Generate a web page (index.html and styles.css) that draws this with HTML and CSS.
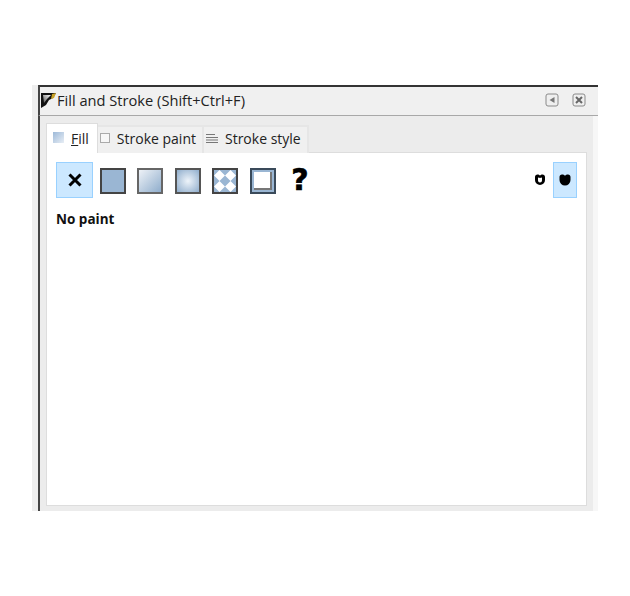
FILE: index.html
```html
<!DOCTYPE html>
<html lang="en">
<head>
    <meta charset="UTF-8">
    <title>Fill and Stroke</title>
    <link rel="stylesheet" href="styles.css">
</head>
<body>
    <div class="window">
        <div class="title-bar">
            <svg class="title-icon" width="17" height="18" viewBox="0 0 17 18">
                <defs>
                    <linearGradient id="brush" x1="1" y1="0" x2="0" y2="1">
                        <stop offset="0" stop-color="#fff"/>
                        <stop offset="1" stop-color="#555"/>
                    </linearGradient>
                </defs>
                <path d="M1 2h15l-3 5-4 2-3 5-5 3z" fill="#111"/>
                <path d="M3 4h8L7 8l-3 4z" fill="url(#brush)"/>
                <path d="M12 3l4-1-2 5-3 1z" fill="#c9a227"/>
            </svg>
            <span class="title-text">Fill and Stroke (Shift+Ctrl+F)</span>
            <div class="title-buttons">
                <svg class="title-button" width="14" height="14" viewBox="0 0 14 14">
                    <rect x="1" y="1" width="12" height="12" rx="2" fill="#efefef" stroke="#8a8a8a"/>
                    <path d="M9.500 4v6L4.500 7z" fill="#777"/>
                </svg>
                <svg class="title-button" width="14" height="14" viewBox="0 0 14 14">
                    <rect x="1" y="1" width="12" height="12" rx="2" fill="#efefef" stroke="#8a8a8a"/>
                    <path d="M4 4l6 6M10 4l-6 6" stroke="#666" stroke-width="2"/>
                </svg>
            </div>
        </div>
        <div class="panel">
            <div class="tabs">
                <div class="tab active">
                    <span class="swatch-fill"></span>
                    <span><u>F</u>ill</span>
                </div>
                <div class="tab">
                    <span class="swatch-none"></span>
                    <span>Stroke paint</span>
                </div>
                <div class="tab">
                    <svg width="12" height="10" viewBox="0 0 12 10">
                        <path d="M0 1.500h9M0 4.500h12M0 7h12M0 9.500h12" stroke="#777" stroke-width="1"/>
                    </svg>
                    <span>Stroke style</span>
                </div>
            </div>
            <div class="tab-content">
                <div class="paint-row">
                    <div class="paint-button selected">
                        <svg width="14" height="14" viewBox="0 0 14 14">
                            <path d="M1.500 1.500l11 11M12.500 1.500l-11 11" stroke="#000" stroke-width="3"/>
                        </svg>
                    </div>
                    <div class="paint-button"><span class="paint flat"></span></div>
                    <div class="paint-button"><span class="paint linear"></span></div>
                    <div class="paint-button"><span class="paint radial"></span></div>
                    <div class="paint-button">
                        <svg class="paint pattern" width="26" height="26" viewBox="0 0 22 22">
                            <path d="M5.500 0l5.500 5.500-5.500 5.500L0 5.500zM16.500 0L22 5.500 16.500 11 11 5.500zM5.500 11l5.500 5.500L5.500 22 0 16.500zM16.500 11l5.500 5.500-5.500 5.500-5.500-5.500z" fill="#fff"/>
                        </svg>
                    </div>
                    <div class="paint-button"><span class="paint swatch"><span class="swatch-inner"></span></span></div>
                    <div class="paint-button unset">?</div>
                    <div class="rule-buttons">
                        <div class="rule-button">
                            <svg width="12" height="12" viewBox="0 0 12 12">
                                <path d="M3.500 .5c1 0 2 .5 2.500 1 .5-.5 1.500-1 2.500-1 1.500 0 2.500 1 2.500 2.500v3a5 5 0 0 1-10 0V3C1 1.500 2 .5 3.500 .5z" fill="#000"/>
                                <path d="M4.500 3.500c.5 0 1 .3 1.500.5.5-.2 1-.5 1.500-.5.3 0 .5.3.5 .5v2.500a2 2 0 0 1-4 0V4c0-.2.2-.5.5-.5z" fill="#fff"/>
                            </svg>
                        </div>
                        <div class="rule-button selected">
                            <svg width="12" height="12" viewBox="0 0 12 12">
                                <path d="M3 .5c1.200 0 2.300.5 3 1.200C6.700 1 7.800.5 9 .5c1.500 0 2.500 1 2.500 2.500v3a5.500 5.500 0 0 1-11 0V3C.5 1.500 1.500.5 3 .5z" fill="#000"/>
                            </svg>
                        </div>
                    </div>
                </div>
                <div class="paint-label">No paint</div>
            </div>
        </div>
    </div>
</body>
</html>
```

FILE: styles.css
```css
* {
    box-sizing: border-box;
}
body {
    margin: 0;
    background-color: #fff;
    font-family: "Open Sans", sans-serif;
    font-size: 14px;
    color: #222;
    overflow: hidden;
}
.window {
    width: 566px;
    height: 426px;
    margin: 85px 0 0 32px;
    padding-left: 6px;
    background: linear-gradient(to right, #eee 6px, #f7f7f7 6px);
    display: flex;
    flex-direction: column;
}
.title-bar {
    height: 31px;
    flex: none;
    display: flex;
    align-items: center;
    padding: 0 12px 3px 0;
    background-color: #f0f0f0;
    border-top: 2px solid #333;
    border-left: 2px solid #444;
    border-bottom: 1px solid #a8a8a8;
}
.title-icon {
    flex: none;
}
.title-text {
    font-size: 14.650px;
    white-space: nowrap;
}
.title-buttons {
    margin-left: auto;
    display: flex;
    gap: 13px;
}
.panel {
    flex: 1;
    display: flex;
    flex-direction: column;
    min-height: 0;
    padding: 6px 11px 5px 6px;
    border-left: 2px solid #444;
    background: linear-gradient(to left, #f7f7f7 5px, #ececec 5px);
}
.tabs {
    height: 30px;
    flex: none;
    display: flex;
    align-items: flex-end;
    position: relative;
    top: 1px;
}
.tab {
    height: 28px;
    display: flex;
    align-items: center;
    gap: 7px;
    padding: 0 6px 4px 2px;
    background-color: #f0f0f0;
    border: 2px solid #e6e6e6;
    border-bottom: none;
    border-left: none;
}
.tab.active {
    height: 30px;
    padding: 0 8px 0 6px;
    gap: 7px;
    background-color: #fff;
    border: 1px solid #ddd;
    border-bottom: none;
}
.swatch-fill {
    width: 11px;
    height: 11px;
    margin-bottom: 3px;
    background: linear-gradient(135deg, #9db9d8, #e8eef5);
}
.swatch-none {
    width: 10px;
    height: 10px;
    background-color: #f7f7f7;
    border: 1px solid #aaa;
}
.tab-content {
    flex: 1;
    min-height: 0;
    background-color: #fff;
    border: 1px solid #ddd;
    padding: 9px;
}
.paint-row {
    display: flex;
    align-items: center;
    height: 36px;
    gap: 1.500px;
}
.paint-button {
    width: 36px;
    height: 36px;
    display: flex;
    align-items: center;
    justify-content: center;
}
.paint-button.selected {
    width: 37px;
}
.paint-button.selected,
.rule-button.selected {
    background-color: #cce8ff;
    border: 1px solid #99d1ff;
}
.paint {
    display: block;
    width: 26px;
    height: 26px;
    margin-top: 1px;
    border: 2px solid #444;
}
.paint.flat {
    background-color: #9ab6d3;
}
.paint.linear {
    background: linear-gradient(135deg, #eef2f7, #8fadcc);
    border-color: #666;
}
.paint.radial {
    background: radial-gradient(circle, #eef4fa, #8fadcc);
    border-color: #555;
}
.paint.pattern {
    background-color: #9ab6d3;
    border-color: #444;
}
.paint.swatch {
    background-color: #9ab6d3;
    border-color: #3a4a5a;
    padding: 2px;
}
.swatch-inner {
    display: block;
    width: 100%;
    height: 100%;
    background-color: #fff;
    border-right: 2px solid #777;
    border-bottom: 2px solid #777;
}
.paint-button.unset {
    font-family: "DejaVu Sans", sans-serif;
    font-weight: bold;
    font-size: 30px;
    -webkit-text-stroke: 0.6px #000;
    color: #000;
    padding-bottom: 1px;
}
.rule-buttons {
    margin-left: auto;
    display: flex;
    align-items: center;
    gap: 1px;
}
.rule-button {
    width: 24px;
    height: 36px;
    display: flex;
    align-items: center;
    justify-content: center;
}
.paint-label {
    margin-top: 12px;
    font-size: 13.500px;
    font-weight: bold;
    color: #111;
}
```
